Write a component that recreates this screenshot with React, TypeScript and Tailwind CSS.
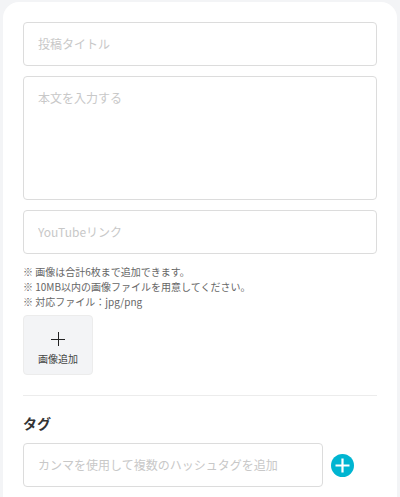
const font = "font-['Noto_Sans_CJK_JP','Noto_Sans',sans-serif]";

export default function App() {
  return (
    <div className={`h-[497px] w-[400px] overflow-hidden bg-[#f3f4f6] px-[3px] pt-[2px] ${font}`}>
      <div className="h-[520px] rounded-t-[16px] bg-white px-[20px] pt-[20px]">
        <div className="flex flex-col gap-[10px]">
          <input
            placeholder="投稿タイトル"
            className="h-[44px] w-full rounded border border-[#dcdcdc] px-[14px] pb-[2px] text-[12px] outline-none placeholder:text-[#c8c8c8]"
          />
          <textarea
            placeholder="本文を入力する"
            className="block h-[124px] w-full resize-none rounded border border-[#dcdcdc] px-[14px] py-[12px] text-[12px] outline-none placeholder:text-[#c8c8c8]"
          />
          <input
            placeholder="YouTubeリンク"
            className="h-[44px] w-full rounded border border-[#dcdcdc] px-[14px] pb-[2px] text-[12px] outline-none placeholder:text-[#c8c8c8]"
          />
        </div>

        <div className="mt-[10px] text-[10px] leading-[15px] text-[#666]">
          <p>※ 画像は合計6枚まで追加できます。</p>
          <p>※ 10MB以内の画像ファイルを用意してください。</p>
          <p>※ 対応ファイル：jpg/png</p>
        </div>

        <button className="mt-[6px] flex h-[60px] w-[70px] flex-col items-center justify-center rounded border border-[#ececec] bg-[#f3f4f6] pt-[8px] text-[10px] text-[#444]">
          <svg width="14" height="14" viewBox="0 0 14 14" className="mb-[5px]">
            <path d="M7.5 0v14M0 7.5h14" stroke="#222" strokeWidth="1" fill="none" />
          </svg>
          画像追加
        </button>

        <div className="mt-[20px] border-t border-[#ececec]" />

        <h2 className="mt-[17px] text-[14px] leading-[20px] font-bold text-[#333]">タグ</h2>

        <div className="mt-[10px] flex items-center gap-[8px]">
          <input
            placeholder="カンマを使用して複数のハッシュタグを追加"
            className="h-[44px] w-[300px] rounded border border-[#dcdcdc] px-[14px] pb-[2px] text-[12px] outline-none placeholder:text-[#c8c8c8]"
          />
          <svg width="23" height="23" viewBox="0 0 23 23">
            <circle cx="11.5" cy="11.5" r="11.5" fill="#00b5d1" />
            <path d="M11.5 4.5v14M4.5 11.5h14" stroke="#fff" strokeWidth="2.2" fill="none" />
          </svg>
        </div>
      </div>
    </div>
  );
}
